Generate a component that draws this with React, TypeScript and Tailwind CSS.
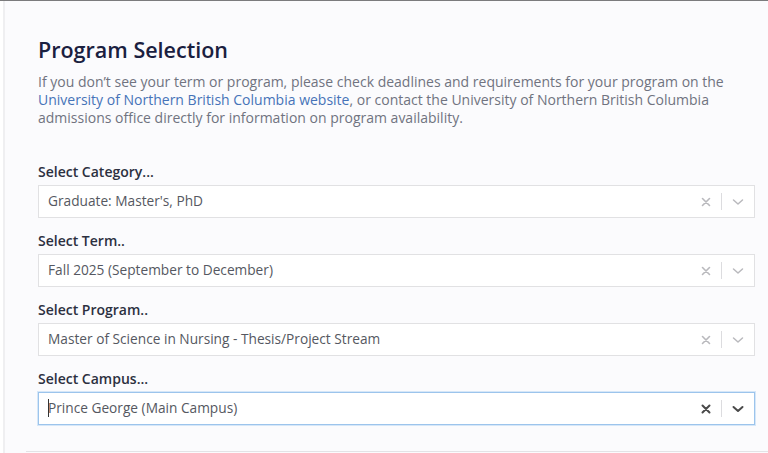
import React from "react";

interface SelectFieldProps {
  label: string;
  value: string;
  focused?: boolean;
}

const SelectField = ({ label, value, focused }: SelectFieldProps) => {
  return (
    <div className="mt-[13px] first:mt-0">
      <div className="mb-[3px] h-[20px] text-[14px] font-semibold leading-[20px] text-[#2c3040]">
        {label}
      </div>
      <div
        className={
          focused
            ? "flex h-[33px] items-center border border-[#9cc4ec] bg-white shadow-[0_0_0_1px_#d6e7f8]"
            : "flex h-[33px] items-center border border-[#e1e1e3] bg-white"
        }
      >
        <div className="relative flex-1 pl-[9px] text-[13.7px] text-[#555861]">
          {focused && (
            <span className="absolute left-[9px] top-[1px] h-[18px] w-px bg-[#333]" />
          )}
          {value}
        </div>
        <div className="flex items-center">
          <svg
            width="10"
            height="10"
            viewBox="0 0 10 10"
            className="mr-[10px]"
            stroke={focused ? "#4a4a4a" : "#b9b9bd"}
            strokeWidth={focused ? 2 : 1.6}
            strokeLinecap="round"
          >
            <path d="M1.5 1.5 L8.5 8.5 M8.5 1.5 L1.5 8.5" />
          </svg>
          <span className="h-[17px] w-px bg-[#dcdcdf]" />
          <svg
            width="12"
            height="8"
            viewBox="0 0 12 8"
            className="mx-[10px]"
            fill="none"
            stroke={focused ? "#4a4a4a" : "#b9b9bd"}
            strokeWidth={focused ? 2 : 1.5}
            strokeLinecap="round"
            strokeLinejoin="round"
          >
            <path d="M1.5 2 L6 6 L10.5 2" />
          </svg>
        </div>
      </div>
    </div>
  );
};

const fields = [
  { label: "Select Category...", value: "Graduate: Master's, PhD" },
  { label: "Select Term..", value: "Fall 2025 (September to December)" },
  {
    label: "Select Program..",
    value: "Master of Science in Nursing - Thesis/Project Stream",
  },
  { label: "Select Campus...", value: "Prince George (Main Campus)", focused: true },
];

export default function App() {
  return (
    <div
      className="h-[453px] w-[768px] overflow-hidden border-t border-[#7b7b7d] bg-white"
      style={{ fontFamily: "'Open Sans', 'Noto Sans', sans-serif" }}
    >
      <div className="ml-[3px] flex h-full flex-col border-l-2 border-[#efeff1] bg-[#fbfbfd]">
        <div className="flex-1 pl-[33px] pr-[13px] pt-[35px]">
          <h1 className="text-[21.5px] font-semibold leading-[28px] text-[#1a2040]">
            Program Selection
          </h1>
          <p className="mt-[9px] max-w-[700px] text-[14px] leading-[18px] text-[#707380]">
            If you don’t see your term or program, please check deadlines and
            requirements for your program on the{" "}
            <a className="text-[#4673b8]">
              University of Northern British Columbia website
            </a>
            , or contact the University of Northern British Columbia admissions
            office directly for information on program availability.
          </p>
          <div className="mt-[35px]">
            {fields.map((f) => (
              <SelectField
                key={f.label}
                label={f.label}
                value={f.value}
                focused={f.focused}
              />
            ))}
          </div>
        </div>
        <div className="mb-[1px] ml-[21px] h-px bg-[#e3e3e6]" />
      </div>
    </div>
  );
}
